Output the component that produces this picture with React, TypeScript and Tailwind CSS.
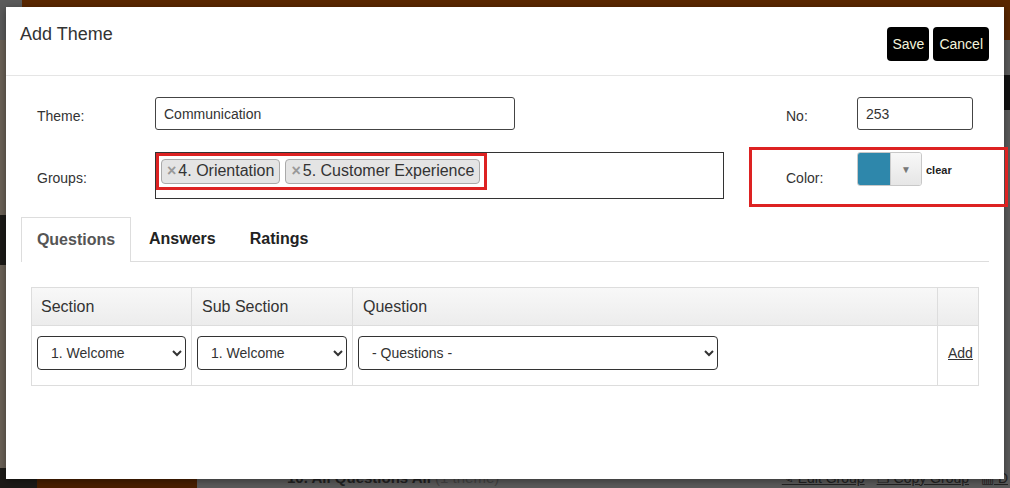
import React from "react";

const Chip = ({ label }: { label: string }) => (
    <span className="flex items-center h-[25px] pl-[5px] pr-[5px] bg-[#e4e4e4] border border-[#aaa] rounded-[4px] text-[16px] text-[#333]">
        <span className="text-[#999] text-[16px] font-bold leading-none mr-[2px]">×</span>
        {label}
    </span>
);

const App = () => {
    return (
        <div className="relative w-[1010px] h-[488px] overflow-hidden bg-[#5b5b5b] font-['Liberation_Sans',Arial,sans-serif]">
            {/* dimmed page behind the dialog */}
            <div className="flex flex-col h-full">
                <div className="h-[40px] bg-[#5a2700] ml-[22px]" />
                <div className="flex flex-1">
                    <div className="w-[22px] flex flex-col bg-[#6b6257]">
                        <div className="h-[50px] mt-[175px] bg-[#1c1a17]" />
                    </div>
                    <div className="flex-1" />
                    <div className="w-[8px] flex flex-col">
                        <div className="h-[35px] mt-[35px] bg-[#111]" />
                    </div>
                </div>
                <div className="flex h-[20px] items-center">
                    <div className="w-[37px] h-full bg-[#1d1b18]" />
                    <div className="w-[160px] h-full bg-[#4a2000]" />
                    <div className="flex-1 pl-[90px] text-[15px] font-bold text-[#222]">
                        10. All Questions All <span className="font-normal text-[#444]">(1 theme)</span>
                    </div>
                    <div className="flex gap-3 pr-[2px] text-[14px] text-[#222] underline">
                        <span>✎ Edit Group</span>
                        <span>❐ Copy Group</span>
                        <span>▥ D</span>
                    </div>
                </div>
            </div>

            {/* dialog */}
            <div className="absolute left-[6px] top-[7px] w-[998px] h-[472px] bg-white shadow-[0_2px_8px_rgba(0,0,0,0.4)]">
                <div className="flex justify-between items-start h-[69px] border-b border-[#e5e5e5] pl-[14px] pr-[15px]">
                    <h2 className="pt-[14px] text-[18px] text-[#333]">Add Theme</h2>
                    <div className="flex gap-[4px] pt-[20px]">
                        <button className="h-[34px] px-[5px] bg-black rounded-[4px] text-[14px] text-[#f4f4dc]">Save</button>
                        <button className="h-[34px] px-[6px] bg-black rounded-[4px] text-[14px] text-[#f4f4dc]">Cancel</button>
                    </div>
                </div>

                <div className="pt-[21px] px-[15px]">
                    <div className="flex items-center h-[33px]">
                        <span className="w-[134px] shrink-0 pl-[16px] pt-[5px] text-[14px] text-[#333]">Theme:</span>
                        <input
                            className="w-[360px] shrink-0 h-[33px] border border-[#444] rounded-[3px] px-[8px] text-[14px] text-[#333]"
                            defaultValue="Communication"
                        />
                        <span className="ml-[271px] w-[71px] shrink-0 pt-[5px] text-[14px] text-[#333]">No:</span>
                        <input
                            className="w-[116px] shrink-0 h-[33px] border border-[#444] rounded-[3px] px-[8px] text-[14px] text-[#333]"
                            defaultValue="253"
                        />
                    </div>

                    <div className="flex items-start mt-[22px] h-[47px]">
                        <span className="w-[134px] shrink-0 pl-[16px] mt-[16px] text-[14px] text-[#333]">Groups:</span>
                        <div className="w-[569px] shrink-0 h-[47px] border border-[#333]">
                            <div className="flex items-center gap-[5px] w-[331px] h-[37px] border-[3px] border-[#dd2222] pl-[2px] pb-[1px]">
                                <Chip label="4. Orientation" />
                                <Chip label="5. Customer Experience" />
                            </div>
                        </div>
                        <div className="flex items-start shrink-0 w-[259px] h-[60px] ml-[25px] -mt-[5px] border-[3px] border-[#dd2222] pt-[2px]">
                            <span className="mt-[16px] ml-[34px] w-[71px] shrink-0 text-[14px] text-[#333]">Color:</span>
                            <div className="flex shrink-0 h-[34px] w-[65px] border border-[#c8c8c8] rounded-[3px] overflow-hidden">
                                <div className="w-[32px] bg-[#2e87ab]" />
                                <div className="flex-1 flex items-center justify-center bg-gradient-to-b from-[#f8f8f8] to-[#e6e6e6] border-l border-[#ccc] text-[10px] text-[#777]">▼</div>
                            </div>
                            <span className="ml-[4px] mt-[10px] text-[11px] font-bold text-[#222]">clear</span>
                        </div>
                    </div>

                    <div className="flex mt-[18px] border-b border-[#ddd] h-[45px] font-bold text-[16px]">
                        <div className="w-[110px] h-[45px] border border-b-0 border-[#ddd] bg-white -mb-px flex items-center justify-center text-[#555]">Questions</div>
                        <div className="px-[18px] flex items-center text-[#222]">Answers</div>
                        <div className="px-[16px] flex items-center text-[#222]">Ratings</div>
                    </div>

                    <table className="mt-[25px] ml-[10px] w-[948px] border-collapse text-[16px] text-[#333]">
                        <thead>
                            <tr className="h-[38px] bg-gradient-to-b from-[#f8f8f8] to-[#ececec]">
                                <th className="w-[160px] border border-[#ddd] text-left font-normal pl-[9px]">Section</th>
                                <th className="w-[161px] border border-[#ddd] text-left font-normal pl-[10px]">Sub Section</th>
                                <th className="w-[585px] border border-[#ddd] text-left font-normal pl-[10px]">Question</th>
                                <th className="border border-[#ddd]" />
                            </tr>
                        </thead>
                        <tbody>
                            <tr className="h-[60px] align-top">
                                <td className="border border-[#ddd] pt-[10px] px-[5px]">
                                    <select className="w-[149px] h-[34px] border border-[#333] rounded-[4px] px-[9px] text-[14px] bg-white">
                                        <option>1. Welcome</option>
                                    </select>
                                </td>
                                <td className="border border-[#ddd] pt-[10px] px-[5px]">
                                    <select className="w-[150px] h-[34px] border border-[#333] rounded-[4px] px-[9px] text-[14px] bg-white">
                                        <option>1. Welcome</option>
                                    </select>
                                </td>
                                <td className="border border-[#ddd] pt-[10px] px-[5px]">
                                    <select className="w-[360px] h-[34px] border border-[#333] rounded-[4px] px-[9px] text-[14px] bg-white">
                                        <option>- Questions -</option>
                                    </select>
                                </td>
                                <td className="border border-[#ddd] pt-[17px] pl-[10px] text-left text-[14px]">
                                    <a className="underline text-[#333]">Add</a>
                                </td>
                            </tr>
                        </tbody>
                    </table>
                </div>
            </div>
        </div>
    );
};

export default App;
